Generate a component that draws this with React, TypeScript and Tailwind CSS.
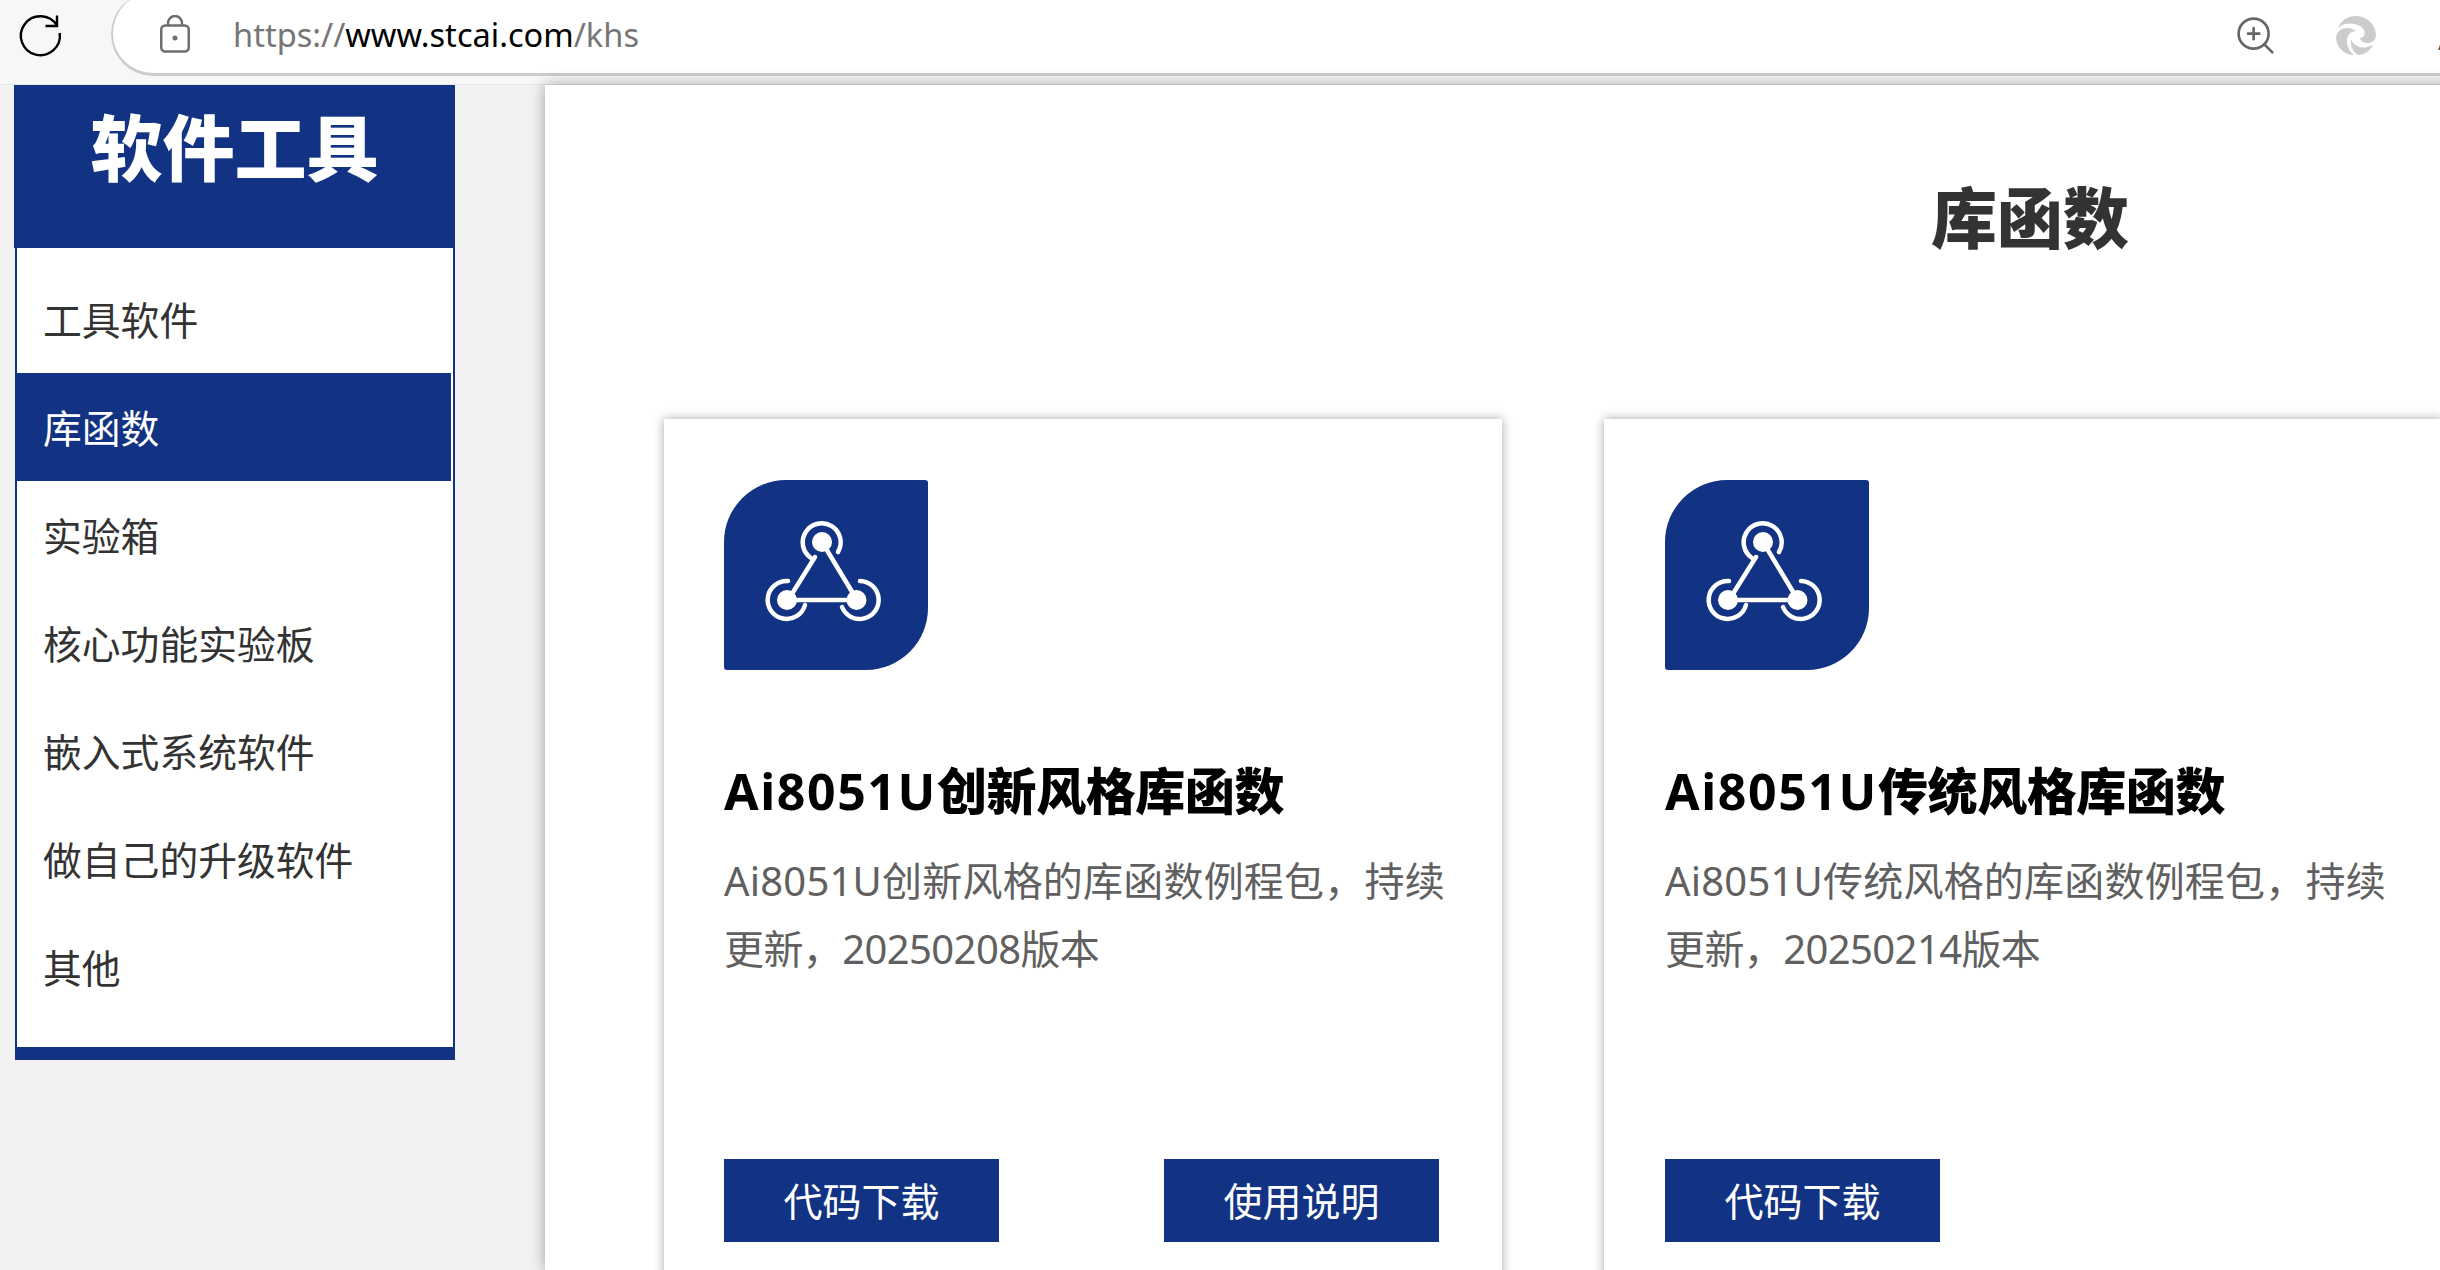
import React from "react";
import { ZoomIn } from "lucide-react";

const navItems = ["工具软件", "库函数", "实验箱", "核心功能实验板", "嵌入式系统软件", "做自己的升级软件", "其他"];

function NetworkIcon() {
  return (
    <svg width="204" height="190" viewBox="0 0 204 190" fill="none" stroke="white" strokeWidth="4.5" strokeLinecap="round">
      <circle cx="98" cy="62" r="10" fill="white" stroke="none" />
      <circle cx="63" cy="120" r="10" fill="white" stroke="none" />
      <circle cx="132.500" cy="120" r="10" fill="white" stroke="none" />
      <path d="M114 72A19 19 0 1 0 87 78" />
      <path d="M64 101A19 19 0 1 0 81 125" />
      <path d="M118 127A19 19 0 1 0 136 101" />
      <path d="M91 77L66 117M98 62L133 120M63 120H133" />
    </svg>
  );
}

function EdgeLogo() {
  return (
    <svg width="40" height="40" viewBox="0 0 40 40" fill="#cccccc" className="ml-[58px] shrink-0">
      <path d="M2 12C5 4 12 0 20 0C31 0 40 9 40 19C40 24 36 27 32 27C28 27 24 25 24 22C27 22 30 19 28 14C25 8 10 4 2 12Z" />
      <path d="M0 21C1 15 6 12 11 12C14 12 18 13 20 15C15 15 11 19 11 25C11 31 14 36 18 39C8 39 0 31 0 21Z" />
      <path d="M15 23C17 29 24 33 31 31C33 30.500 35 30 37 29C34 35 28 39 22 39C17 36 14 30 15 23Z" />
    </svg>
  );
}

function Card({ title, latin, desc, buttons, inset }: { title: string; latin: string; desc: [string, string]; buttons: string[]; inset: string }) {
  return (
    <div className={`w-[838px] h-[900px] shrink-0 bg-white pt-[61px] pr-[63px] shadow-[0_0_10px_rgba(0,0,0,0.35)] ${inset}`}>
      <div className="w-[204px] h-[190px] bg-[#123383] rounded-tl-[62px] rounded-br-[62px] rounded-tr-[3px] rounded-bl-[3px]">
        <NetworkIcon />
      </div>
      <h3 className="mt-[86px] text-[50px] leading-[70px] font-black text-black whitespace-nowrap tracking-[-0.4px]">
        <span className="font-bold tracking-[1.6px]">{latin}</span>
        {title}
      </h3>
      <div className="mt-[21px] h-[312px] text-[40px] leading-[68px] text-[#606060]">
        <p className="whitespace-nowrap tracking-[0.2px]">{desc[0]}</p>
        <p className="whitespace-nowrap tracking-[-0.6px]">{desc[1]}</p>
      </div>
      <div className="flex justify-between">
        {buttons.map((b) => (
          <div key={b} className="w-[275px] h-[83px] pt-[2px] bg-[#123383] text-white text-[39px] flex items-center justify-center">
            {b}
          </div>
        ))}
      </div>
    </div>
  );
}

export default function App() {
  return (
    <div className="w-[2440px] h-[1270px] overflow-hidden bg-[#f2f2f2] font-['Noto_Sans','Noto_Sans_CJK_SC',sans-serif]">
      <div className="h-[85px] bg-[#f7f7f7] border-b border-[#e6e6e6] flex overflow-hidden">
        <div className="w-[111px] shrink-0">
          <svg width="80" height="70" viewBox="0 0 80 70" fill="none" stroke="black" strokeWidth="2.4">
            <path d="M59.700 33A19.500 19.500 0 1 1 57 25.500" />
            <path d="M57 15.500V26H45.500" />
          </svg>
        </div>
        <div className="-mt-[8px] h-[84px] w-[2360px] shrink-0 bg-white rounded-l-[42px] border-l-2 border-b-[3px] border-[#cccccc] flex items-center pt-[6px]">
          <svg width="30" height="38" viewBox="0 0 30 38" fill="none" stroke="#6e6e6e" strokeWidth="2.5" className="ml-[47px] -mt-[3px] shrink-0">
            <rect x="1.250" y="10.500" width="27.500" height="26" rx="4" />
            <path d="M8 10.500V8a7 7 0 0 1 14 0v2.500" />
            <circle cx="15" cy="23" r="2.500" fill="#6e6e6e" stroke="none" />
          </svg>
          <div className="ml-[43px] text-[32.6px] text-[#767676] whitespace-nowrap">
            https://<span className="text-black">www.stcai.com</span>/khs
          </div>
          <div className="flex-1" />
          <ZoomIn size={45} strokeWidth={1.4} className="text-[#666666] shrink-0" />
          <EdgeLogo />
          <span className="ml-[62px] mr-[19px] text-[#555555] text-[22px] shrink-0 pt-[12px]">A</span>
        </div>
      </div>

      <div className="flex">
        <div className="ml-[14px] w-[441px] shrink-0">
          <div className="h-[163px] bg-[#123383] text-white text-[72px] leading-[125px] font-black text-center">软件工具</div>
          <div className="ml-px border-x-2 border-b-[13px] border-[#123383] bg-white pt-[17px] pb-[26px] text-[#333333] text-[38.8px]">
            {navItems.map((n) => (
              <div
                key={n}
                className={
                  n === "库函数"
                    ? "h-[108px] pt-[2px] -ml-[2px] mr-[2px] pl-[28px] bg-[#123383] text-white flex items-center"
                    : "h-[108px] pt-[2px] pl-[26px] flex items-center"
                }
              >
                {n}
              </div>
            ))}
          </div>
        </div>

        <div className="ml-[90px] w-[2970px] shrink-0 h-[1185px] bg-white shadow-[0_0_14px_rgba(0,0,0,0.35)]">
          <h1 className="pt-[83px] h-[334px] text-center text-[66px] leading-[99px] font-black text-[#333333]">库函数</h1>
          <div className="pl-[119px] flex gap-[102px]">
            <Card
              inset="pl-[60px]"
              latin="Ai8051U"
              title="创新风格库函数"
              desc={["Ai8051U创新风格的库函数例程包，持续", "更新，20250208版本"]}
              buttons={["代码下载", "使用说明"]}
            />
            <Card
              inset="pl-[61px]"
              latin="Ai8051U"
              title="传统风格库函数"
              desc={["Ai8051U传统风格的库函数例程包，持续", "更新，20250214版本"]}
              buttons={["代码下载"]}
            />
          </div>
        </div>
      </div>
    </div>
  );
}
